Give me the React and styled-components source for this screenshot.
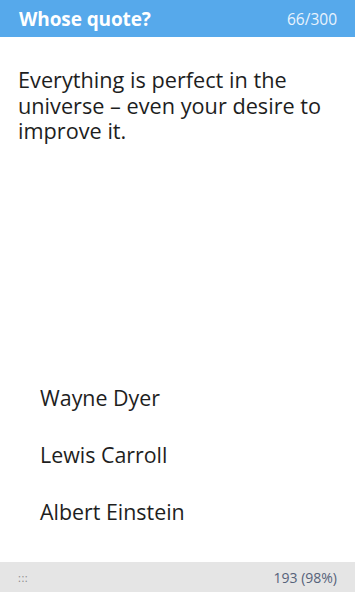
import React from "react";
import styled, { createGlobalStyle } from "styled-components";

const Global = createGlobalStyle`
  html, body { margin: 0; padding: 0; background: #fff; }
  body { font-family: "Open Sans", "DejaVu Sans", sans-serif; }
  #root { height: 592px; }
`;

const Screen = styled.div`
  width: 355px;
  height: 592px;
  display: flex;
  flex-direction: column;
  background: #fff;
  overflow: hidden;
`;

const Header = styled.header`
  height: 37px;
  flex: none;
  background: #56a9eb;
  display: flex;
  align-items: center;
  justify-content: space-between;
  padding: 0 18px 0 19px;
  box-sizing: border-box;
`;

const Title = styled.h1`
  margin: 0;
  font-size: 19px;
  font-weight: 700;
  color: #fff;
  letter-spacing: -0.1px;
`;

const Counter = styled.span`
  font-size: 15.5px;
  color: #e9f3fd;
`;

const Body = styled.main`
  flex: 1;
  display: flex;
  flex-direction: column;
  justify-content: space-between;
  padding: 0 18px;
`;

const Quote = styled.p`
  margin: 30px 0 0;
  font-size: 21.7px;
  line-height: 25.5px;
  color: #1e1e1e;
`;

const Answers = styled.ul`
  list-style: none;
  margin: 0 0 36px;
  padding: 0 0 0 22px;
  display: flex;
  flex-direction: column;
  gap: 29px;
`;

const Answer = styled.li`
  font-size: 21.4px;
  line-height: 28px;
  color: #1e1e1e;
`;

const Footer = styled.footer`
  height: 30px;
  flex: none;
  background: #e5e5e5;
  display: flex;
  align-items: center;
  justify-content: space-between;
  padding: 0 18px;
`;

const Dots = styled.span`
  font-size: 11px;
  color: #8a8a8a;
  letter-spacing: 0.5px;
`;

const Score = styled.span`
  font-size: 14px;
  color: #56627a;
`;

export default function App() {
  return (
    <>
      <Global />
      <Screen>
        <Header>
          <Title>Whose quote?</Title>
          <Counter>66/300</Counter>
        </Header>
        <Body>
          <Quote>
            Everything is perfect in the universe – even your desire to improve it.
          </Quote>
          <Answers>
            <Answer>Wayne Dyer</Answer>
            <Answer>Lewis Carroll</Answer>
            <Answer>Albert Einstein</Answer>
          </Answers>
        </Body>
        <Footer>
          <Dots>:::</Dots>
          <Score>193 (98%)</Score>
        </Footer>
      </Screen>
    </>
  );
}
